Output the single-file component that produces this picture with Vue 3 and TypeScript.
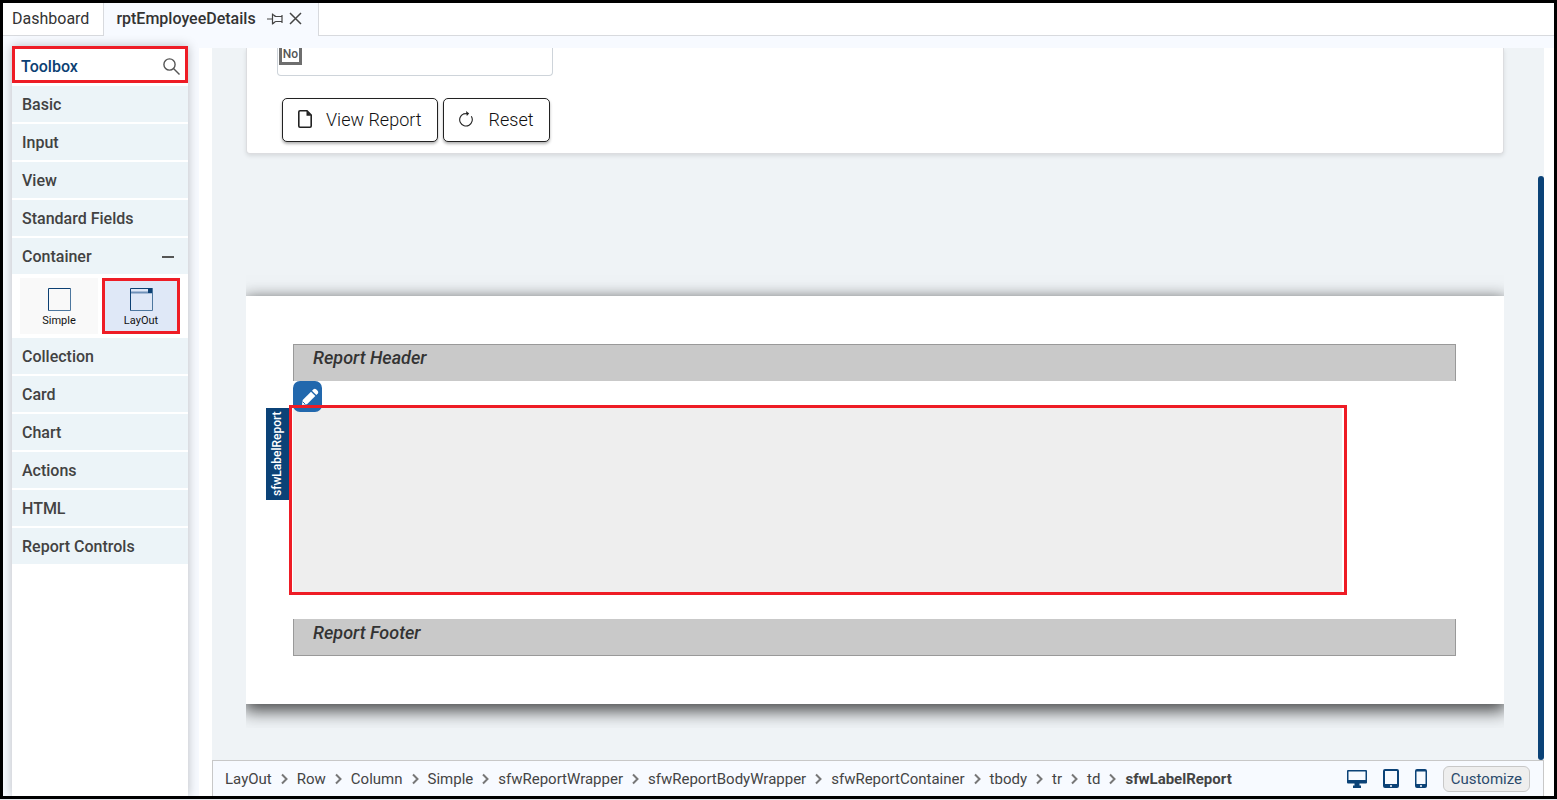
<script setup lang="ts">
import { ref } from 'vue'

interface Group {
  name: string
  tools?: string[]
}

const groups: Group[] = [
  { name: 'Basic' },
  { name: 'Input' },
  { name: 'View' },
  { name: 'Standard Fields' },
  { name: 'Container', tools: ['Simple', 'LayOut'] },
  { name: 'Collection' },
  { name: 'Card' },
  { name: 'Chart' },
  { name: 'Actions' },
  { name: 'HTML' },
  { name: 'Report Controls' },
]

const crumbs: string[] = [
  'LayOut', 'Row', 'Column', 'Simple', 'sfwReportWrapper', 'sfwReportBodyWrapper',
  'sfwReportContainer', 'tbody', 'tr', 'td', 'sfwLabelReport',
]

const openGroup = ref('Container')
const activeTool = ref('LayOut')

function toggle(name: string): void {
  openGroup.value = openGroup.value === name ? '' : name
}
</script>

<template>
  <div class="app">
    <nav class="tabs">
      <button class="tab" type="button">Dashboard</button>
      <div class="tab active">
        <span>rptEmployeeDetails</span>
        <button class="icon-btn" type="button" aria-label="Pin tab">
          <svg width="16" height="12" viewBox="0 0 16 12" fill="none" stroke="#444" stroke-width="1.2">
            <path d="M0 6h5M5.500 .5v11M5.500 1.500C7 1.500 7.500 3.500 9 3.500H15M5.500 10.500C7 10.500 7.500 8.500 9 8.500H15M15 2v8" />
          </svg>
        </button>
        <button class="icon-btn close" type="button" aria-label="Close tab">
          <svg width="13" height="13" viewBox="0 0 13 13" fill="none" stroke="#444" stroke-width="1.5">
            <path d="M1 1l11 11M12 1L1 12" />
          </svg>
        </button>
      </div>
      <div class="tab-rest"></div>
    </nav>

    <div class="body">
      <aside class="toolbox">
        <header class="toolbox-head">
          <h2>Toolbox</h2>
          <button class="icon-btn" type="button" aria-label="Search toolbox">
            <svg width="17" height="17" viewBox="0 0 17 17" fill="none" stroke="#555" stroke-width="1.4">
              <circle cx="6.500" cy="6.500" r="5.600" />
              <path d="M10.500 10.500l6 6" />
            </svg>
          </button>
        </header>
        <section v-for="g in groups" :key="g.name" class="group">
          <button class="group-head" type="button" :aria-expanded="openGroup === g.name" @click="toggle(g.name)">
            <span>{{ g.name }}</span>
            <i v-if="openGroup === g.name" class="minus"></i>
          </button>
          <div v-if="g.tools && openGroup === g.name" class="tools">
            <button
              v-for="t in g.tools"
              :key="t"
              type="button"
              class="tool"
              :class="{ selected: activeTool === t }"
              @click="activeTool = t"
            >
              <svg width="23" height="23" viewBox="0 0 23 23" fill="none" stroke="#0c4073">
                <path d="M22.500 .5v22H.5" stroke="#4d779f" />
                <path d="M.5 22.500V.5h22" />
                <template v-if="t === 'LayOut'">
                  <path d="M1 4.500h21" stroke="#6f91b8" stroke-width="2" />
                  <rect x="18" y="0" width="4" height="5" fill="#0c4073" stroke="none" />
                </template>
              </svg>
              <span>{{ t }}</span>
            </button>
          </div>
        </section>
      </aside>

      <main class="editor">
        <div class="canvas">
          <section class="card">
            <div class="field"><span class="no">No</span></div>
            <div class="actions">
              <button class="btn" type="button">
                <svg width="14" height="18" viewBox="0 0 14 18" fill="none" stroke="#222" stroke-width="1.600">
                  <path d="M2 .8h7l4.200 4.200v11q0 1.200-1.200 1.200H2Q.8 17.200 .8 16V2Q.8 .8 2 .8z" />
                  <path d="M8.500 .8v5h4.700z" fill="#222" stroke="none" />
                </svg>
                <span>View Report</span>
              </button>
              <button class="btn reset" type="button">
                <svg width="14" height="16" viewBox="0 0 14 16" fill="none" stroke="#222" stroke-width="1.100">
                  <path d="M12.200 5.300A6.200 6.200 0 1 1 8.500 2.500H5" stroke="none" />
                  <path d="M12.300 5.300A6.300 6.300 0 1 1 4.500 2.900L9 2.500" />
                  <path d="M7 0l3.200 2.400L7.800 5z" fill="#222" stroke="none" />
                </svg>
                <span>Reset</span>
              </button>
            </div>
          </section>

          <section class="sheet">
            <div class="band top">Report Header</div>
            <div class="label-report">
              <button class="edit" type="button" aria-label="Edit sfwLabelReport">
                <svg width="18" height="18" viewBox="0 0 18 18" fill="#fff">
                  <path d="M1 17l.7-5L10 3.700 14.300 8 6 16.300z" />
                  <path d="M11 2.700L12.500 1.200q1.300-1 2.600 0l1.700 1.700q1 1.300 0 2.600L15.300 7z" />
                  <path d="M1.800 13.800l2.400 2.400" stroke="#2268ad" stroke-width="1" />
                </svg>
              </button>
              <span class="side-tag">sfwLabelReport</span>
            </div>
            <div class="band bottom">Report Footer</div>
          </section>
          <div class="thumb"></div>
        </div>

        <footer class="status">
          <nav class="crumbs">
            <template v-for="(c, i) in crumbs" :key="c">
              <svg v-if="i > 0" width="7" height="12" viewBox="0 0 7 12" fill="none" stroke="#777" stroke-width="2">
                <path d="M1 1.500L5.500 6 1 10.500" />
              </svg>
              <a href="#" :class="{ current: i === crumbs.length - 1 }">{{ c }}</a>
            </template>
          </nav>
          <div class="devices">
            <button class="icon-btn" type="button" aria-label="Desktop">
              <svg width="20" height="18" viewBox="0 0 20 18" fill="#0b4277">
                <path fill-rule="evenodd" d="M1 0h18q1 0 1 1v11.500q0 1-1 1h-6.500v2h1.500V18H6v-2.500h1.500v-2H1q-1 0-1-1V1q0-1 1-1zM1.500 1.500v8.500h17V1.500z" />
              </svg>
            </button>
            <button class="icon-btn" type="button" aria-label="Tablet">
              <svg width="16" height="19" viewBox="0 0 16 19" fill="#0b4277">
                <path fill-rule="evenodd" d="M2 0h12q2 0 2 2v15q0 2-2 2H2q-2 0-2-2V2q0-2 2-2zM2 2v13h12V2zM7 16.200v1.600h2v-1.600z" />
              </svg>
            </button>
            <button class="icon-btn" type="button" aria-label="Phone">
              <svg width="12" height="19" viewBox="0 0 12 19" fill="#0b4277">
                <path fill-rule="evenodd" d="M2 0h8q2 0 2 2v15q0 2-2 2H2q-2 0-2-2V2q0-2 2-2zM1.500 2.500v12.500h9V2.500zM5 16.200v1.600h2v-1.600z" />
              </svg>
            </button>
            <button class="customize" type="button">Customize</button>
          </div>
        </footer>
      </main>
    </div>
  </div>
</template>

<style>
body {
  margin: 0;
  background: #e4e6ea;
}
</style>

<style scoped>
* {
  box-sizing: border-box;
}
.app {
  display: flex;
  flex-direction: column;
  height: calc(100vh - 1px);
  border: 3px solid #000;
  background: #f7faff;
  color: #333;
  font-family: Roboto, "Liberation Sans", sans-serif;
  font-size: 16px;
  overflow: hidden;
}
button {
  font: inherit;
  color: inherit;
  border: 0;
  background: none;
  padding: 0;
  cursor: pointer;
}
svg {
  display: block;
  flex: none;
}
.tabs {
  display: flex;
  height: 33px;
  flex: none;
}
.tab {
  display: flex;
  align-items: center;
  padding: 0 14px 2px 9px;
  background: #fff;
  border-right: 1px solid #d8dade;
  border-bottom: 1px solid #d8dade;
}
.tab.active {
  gap: 11px;
  padding: 0 16px 2px 12px;
  background: #f7faff;
  border-bottom: 0;
  font-weight: 500;
}
.close {
  margin-left: -5px;
}
.tab-rest {
  flex: 1;
  background: #fff;
  border-bottom: 1px solid #d8dade;
}
.body {
  display: flex;
  flex: 1;
  min-height: 0;
}
.toolbox {
  width: 176px;
  flex: none;
  margin: 10px 11px 0 9px;
  background: #fff;
  box-shadow: 0 0 10px rgba(0, 0, 0, 0.25);
}
.toolbox-head {
  display: flex;
  align-items: center;
  justify-content: space-between;
  height: 37px;
  margin-bottom: 3px;
  padding: 3px 5px 0 6px;
  border: 3px solid #ee1c25;
}
.toolbox-head h2 {
  margin: 0;
  font-size: 16px;
  font-weight: 500;
  color: #0c3f73;
}
.group {
  margin-bottom: 2px;
}
.group-head {
  display: flex;
  align-items: center;
  justify-content: space-between;
  width: 100%;
  height: 36px;
  padding: 0 14px 0 10px;
  background: #ecf4f8;
  color: #424242;
  font-weight: 500;
}
.minus {
  width: 12px;
  height: 2px;
  margin-top: 2px;
  background: #555;
}
.tools {
  display: grid;
  grid-template-columns: 1fr 1fr;
  gap: 4px;
  padding: 4px 8px 2px;
}
.tool {
  display: flex;
  flex-direction: column;
  align-items: center;
  justify-content: center;
  gap: 3px;
  height: 56px;
  padding-top: 2px;
  background: #f9f9f9;
  color: #111;
  font-size: 11px;
  line-height: 13px;
}
.tool.selected {
  background: #dfe8f7;
  border: 3px solid #ee1c25;
}
.editor {
  display: flex;
  flex: 1;
  flex-direction: column;
  min-width: 0;
  margin-top: 12px;
  padding: 0 10px 0 13px;
  background: #fff;
}
.canvas {
  position: relative;
  flex: 1;
  min-height: 0;
  padding: 0 40px 0 34px;
  background: #eff3f6;
  overflow: hidden;
}
.card {
  padding: 0 30px 11px;
  background: #fff;
  border: 1px solid #dcdde0;
  border-top: 0;
  border-radius: 0 0 4px 4px;
  box-shadow: 0 2px 4px rgba(0, 0, 0, 0.1);
}
.field {
  width: 276px;
  height: 28px;
  padding-left: 1px;
  border: 1px solid #ced4da;
  border-top: 0;
  border-radius: 0 0 4px 4px;
}
.no {
  display: block;
  width: 23px;
  height: 17px;
  border: 3px solid #6e6e6e;
  border-top: 0;
  color: #555;
  font-size: 12px;
  font-weight: 500;
  line-height: 13px;
  text-align: center;
}
.actions {
  display: flex;
  gap: 5px;
  padding: 22px 0 0 5px;
}
.btn {
  display: flex;
  align-items: center;
  gap: 14px;
  height: 44px;
  padding: 0 15px 2px;
  border: 1px solid #222;
  border-radius: 5px;
  background: #fff;
  color: #111;
  font-size: 18px;
  font-weight: 300;
  box-shadow: 0 2px 3px rgba(0, 0, 0, 0.3);
}
.btn.reset {
  gap: 16px;
}
.sheet {
  margin-top: 142px;
  padding: 48px 48px 48px 47px;
  background: #fff;
  box-shadow: 0 5px 16px 2px rgba(0, 0, 0, 0.7);
  clip-path: inset(-24px 0);
}
.band {
  height: 37px;
  padding-left: 19px;
  border: 1px solid #999;
  background: #c9c9c9;
  font-size: 18px;
  font-style: italic;
  font-weight: 500;
  line-height: 26px;
}
.band.top {
  border-bottom: 0;
}
.band.bottom {
  border-top: 0;
  line-height: 28px;
}
.label-report {
  position: relative;
  width: 91%;
  height: 190px;
  margin: 24px 0 24px -4px;
  padding: 3px 5px 3px 4px;
  background: #eee content-box;
}
.label-report::after {
  content: "";
  position: absolute;
  inset: 0;
  border: 3px solid #ee1c25;
  pointer-events: none;
}
.edit {
  position: absolute;
  left: 4px;
  top: -24px;
  display: flex;
  align-items: center;
  justify-content: flex-end;
  width: 29px;
  height: 31px;
  padding-right: 3px;
  border-radius: 7px;
  background: #2268ad;
}
.side-tag {
  position: absolute;
  right: 100%;
  top: 3px;
  width: 23px;
  height: 92px;
  background: #0b4277;
  color: #fff;
  font-size: 12px;
  font-weight: 500;
  line-height: 23px;
  text-align: center;
  writing-mode: vertical-rl;
  transform: rotate(180deg);
}
.thumb {
  position: absolute;
  right: 0;
  top: 128px;
  bottom: 0;
  width: 6px;
  border-radius: 3px;
  background: #0b4277;
}
.status {
  display: flex;
  align-items: center;
  justify-content: space-between;
  height: 36px;
  flex: none;
  padding: 0 13px 0 12px;
  border: 1px solid #c8c8c8;
  border-bottom: 0;
  background: #f7faff;
}
.crumbs {
  display: flex;
  align-items: center;
  gap: 9px;
  font-size: 15px;
}
.crumbs a {
  color: #444;
  text-decoration: none;
}
.crumbs a.current {
  font-weight: 700;
}
.devices {
  display: flex;
  align-items: center;
  gap: 16px;
}
.customize {
  height: 26px;
  padding: 0 7px;
  border: 1px solid #c8c8c8;
  border-radius: 6px;
  background: #eee;
  color: #2b4a6c;
  font-size: 15px;
}
</style>
